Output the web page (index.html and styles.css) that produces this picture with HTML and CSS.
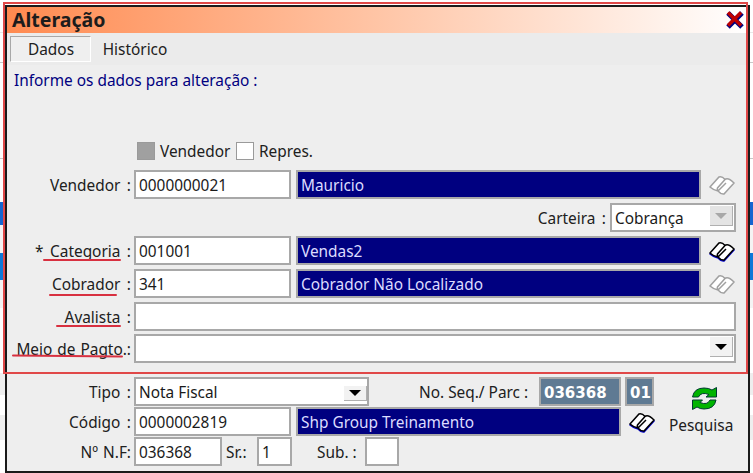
FILE: index.html
```html
<!DOCTYPE html>
<html lang="pt">
<head>
<meta charset="utf-8">
<title>Alteração</title>
<link rel="stylesheet" href="styles.css">
</head>
<body>
<svg width="0" height="0" class="defs">
  <defs>
    <g id="book">
      <path d="M1 13 L10 3 Q13 2 16 5.500 Q19 3 25 9 L15 20 Q12 20.500 9 17 Q5 16.500 1 13 Z" fill="#fff"/>
      <path d="M1 13 L10 3 Q13 2 16 5.500 Q19 3 25 9 L15 20 Q12 20.500 9 17 Q5 16.500 1 13 Z M16 5.500 L8.500 14 Q8 15.500 9 17 M9 17 L17 9" fill="none" stroke="currentColor" stroke-width="1.500"/>
    </g>
  </defs>
</svg>
<div class="backdrop"></div>
<main class="dialog">
  <header class="titlebar">
    <h1 class="title">Alteração</h1>
    <svg class="close" width="20" height="20" viewBox="0 0 20 20">
      <path d="M3 3 L17 17 M17 3 L3 17" stroke="#000080" stroke-width="5"/>
      <path d="M3 2.500 L16 15.500 M16 2.500 L3 15.500" stroke="#c00000" stroke-width="3.500"/>
    </svg>
  </header>
  <nav class="tabs">
    <span class="tab active">Dados</span>
    <span class="tab">Histórico</span>
  </nav>
  <section class="body">
    <p class="hint">Informe os dados para alteração :</p>
    <div class="checks">
      <span class="check checked"></span><span class="checklabel first">Vendedor</span>
      <span class="check"></span><span class="checklabel">Repres.</span>
    </div>
    <div class="row">
      <label class="label">Vendedor :</label>
      <span class="input code">0000000021</span>
      <span class="input name">Mauricio</span>
      <svg class="book off" width="26" height="22" viewBox="0 0 26 22"><use href="#book"/></svg>
    </div>
    <div class="row row-carteira">
      <label class="label-inline">Carteira :</label>
      <span class="input select carteira">Cobrança<span class="arrow off"></span></span>
    </div>
    <div class="row">
      <label class="label">* Categoria :</label>
      <span class="input code">001001</span>
      <span class="input name">Vendas2</span>
      <svg class="book on" width="26" height="22" viewBox="0 0 26 22"><use href="#book"/></svg>
    </div>
    <div class="row">
      <label class="label">Cobrador :</label>
      <span class="input code">341</span>
      <span class="input name">Cobrador Não Localizado</span>
      <svg class="book off" width="26" height="22" viewBox="0 0 26 22"><use href="#book"/></svg>
    </div>
    <div class="row row-tight">
      <label class="label">Avalista :</label>
      <span class="input wide"></span>
    </div>
    <div class="row">
      <label class="label label-narrow">Meio de Pagto.:</label>
      <span class="input wide select"><span class="arrow"></span></span>
    </div>
    <div class="lower">
      <div class="row-lower">
        <label class="label">Tipo :</label>
        <span class="input select tipo">Nota Fiscal<span class="arrow small"></span></span>
        <label class="label-seq">No. Seq./ Parc :</label>
        <span class="badge seq">036368</span>
        <span class="badge parc">01</span>
      </div>
      <div class="row-lower">
        <label class="label">Código :</label>
        <span class="input code">0000002819</span>
        <span class="input name short">Shp Group Treinamento</span>
        <svg class="book on" width="26" height="22" viewBox="0 0 26 22"><use href="#book"/></svg>
      </div>
      <div class="row-lower">
        <label class="label label-narrow">Nº N.F:</label>
        <span class="input nf">036368</span>
        <label class="label-sr">Sr.:</label>
        <span class="input sr">1</span>
        <label class="label-sub">Sub. :</label>
        <span class="input sub"></span>
      </div>
      <div class="search">
        <svg class="search-icon" width="27" height="25" viewBox="0 0 27 25">
          <path d="M1.500 11 Q3 2 13 2 Q18 2 21 4 L25.500 1.500 L25.500 11 L15 11 L18 8.500 Q10 5.500 7.500 11 Z" fill="#00b400" stroke="#003a30" stroke-width="1"/>
          <path d="M25 14 Q23.500 23 13 23 Q9 23 6 21 L1.500 23.500 L1.500 14 L11.500 14 L9 16.500 Q16.500 19.500 19 14 Z" fill="#00b400" stroke="#003a30" stroke-width="1"/>
        </svg>
        <span class="search-label">Pesquisa</span>
      </div>
    </div>
  </section>
</main>
<div class="frame"></div>
<span class="mark mark-cat"></span>
<span class="mark mark-cob"></span>
<span class="mark mark-ava"></span>
<span class="mark mark-mei"></span>
</body>
</html>
```
FILE: styles.css
```css
* { box-sizing: border-box; }
html, body { margin: 0; height: 100%; }
body {
  width: 753px; height: 473px; position: relative; overflow: hidden;
  background: #fff; font-family: "Noto Sans", "Open Sans", sans-serif;
  font-size: 15.4px; color: #202020;
}
.defs { position: absolute; }
.backdrop {
  position: absolute; inset: 0;
  background: linear-gradient(#fff 0 32px, #e8e8e8 32px 33px, #fff 33px 62px, #c8c8c8 62px 63px, #fff 63px 158px, #c8c8c8 158px 159px, #fff 159px 202px, #1565d0 202px 225px, #f4f4f4 225px 253px, #0d78d8 253px 280px, #f4f4f4 280px 308px, #fff 308px 373px, #eeeeee 373px 395px, #fff 395px 415px, #eeeeee 415px 440px, #fff 440px);
}
.dialog {
  position: absolute; left: 5px; top: 5px; width: 745px; height: 468px;
  border: 2px solid #1a1a1a; background: #eeeeee;
  display: flex; flex-direction: column;
}
.titlebar {
  height: 26px; flex: none; display: flex; align-items: center; justify-content: space-between;
  padding: 0 3px 0 5px;
  background: linear-gradient(90deg, #ff8a50, #ffc5a6 50%, #fff 100%);
}
.title { margin: 0; font-size: 19.5px; font-weight: 700; color: #1c1c1c; line-height: 24px; }
.tabs { height: 32px; flex: none; background: #ebebeb; display: flex; align-items: center; padding-left: 3px; }
.tab { height: 26px; width: 82px; line-height: 28px; text-align: center; }
.tab.active { width: 81px; background: #efefef; border: 1px solid #d8d8d8; border-top-color: #a8a8a8; border-left-color: #a8a8a8; border-right-color: #fff; border-bottom-color: #fff; line-height: 26px; padding-left: 1px; }
.tab + .tab { width: 88px; }
.body { flex: 1; position: relative; }
.hint { margin: 5px 0 0 7px; height: 20px; line-height: 21px; color: #000080; }
.checks { display: flex; align-items: center; margin: 52px 0 10px 130px; height: 18px; }
.check { width: 18px; height: 18px; border: 1px solid #9a9a9a; background: #fff; flex: none; }
.check.checked { background: #a0a0a0; }
.checklabel { margin-left: 5px; white-space: nowrap; line-height: 20px; height: 18px; }
.checklabel.first { width: 76px; }
.row { display: flex; align-items: center; height: 29px; margin-bottom: 4px; }
.row-tight { margin-bottom: 3px; }
.row-carteira { justify-content: flex-end; padding-right: 12px; }
.row-lower { display: flex; align-items: center; height: 29px; margin-bottom: 1px; }
.label { width: 125px; text-align: right; padding: 2px 1px 0 0; flex: none; white-space: nowrap; word-spacing: 2.5px; }
.label.label-narrow { word-spacing: 1px; }
.label-inline { margin-right: 4px; padding-top: 2px; word-spacing: 2.5px; }
.input {
  height: 29px; border: 2px solid #a8a8a8; background: #fff;
  line-height: 27px; padding-left: 3px; flex: none; position: relative; white-space: nowrap; color: #1a1a1a;
}
.code { width: 157px; margin-left: 2px; }
.name { width: 405px; margin-left: 5px; background: #000080; color: #dcdcff; }
.name.short { width: 325px; }
.wide { width: 602px; margin-left: 2px; }
.carteira { width: 126px; }
.tipo { width: 235px; margin-left: 2px; }
.select .arrow {
  position: absolute; right: 1px; top: 1px; width: 23px; height: 20px; background: #f2f2f2;
  border-right: 1px solid #b0b0b0; border-bottom: 1px solid #b0b0b0;
}
.select .arrow.small { top: 7px; height: 15px; right: 0; }
.arrow::after {
  content: ""; position: absolute; left: 5px; top: 7px;
  border-left: 6px solid transparent; border-right: 6px solid transparent; border-top: 6px solid #000;
}
.arrow.small::after { top: 4px; }
.arrow.off { background: #e4e4e4; }
.arrow.off::after { border-top-color: #a8a8a8; }
.book { flex: none; margin-left: 8px; }
.book.off { color: #a0a0a0; }
.book.on { color: #000; filter: drop-shadow(0 1px 0 #0000d0); }
.label-seq { margin-left: 50px; padding-top: 2px; width: 120px; white-space: nowrap; flex: none; }
.badge {
  height: 29px; border: 2px solid #a8a8a8; background: #5f7a93; color: #fff;
  font-family: "DejaVu Sans", sans-serif; font-weight: 700; font-size: 15px; line-height: 28px; padding-left: 3px; flex: none;
}
.seq { width: 82px; }
.parc { width: 29px; margin-left: 4px; }
.nf { width: 88px; margin-left: 2px; }
.label-sr { margin-left: 4px; padding-top: 2px; width: 31px; flex: none; }
.sr { width: 35px; }
.label-sub { margin-left: 25px; padding-top: 2px; width: 48px; flex: none; white-space: nowrap; }
.sub { width: 34px; }
.lower { position: relative; margin-top: 14px; }
.search {
  position: absolute; left: 662px; top: 9px; display: flex; flex-direction: column; align-items: center;
}
.search-icon { margin-left: 6px; }
.search-label { line-height: 20px; margin-top: 5px; }
.frame {
  position: absolute; left: 3px; top: 2px; width: 745px; height: 372px;
  border: 2px solid #e04848; pointer-events: none;
}
.mark { position: absolute; height: 2px; background: #d83040; border-radius: 1px; }
.mark-cat { left: 43px; top: 259px; width: 78px; }
.mark-cob { left: 49px; top: 294px; width: 68px; }
.mark-ava { left: 56px; top: 325px; width: 65px; }
.mark-mei { left: 12px; top: 355px; width: 111px; transform: rotate(.5deg); }
```
